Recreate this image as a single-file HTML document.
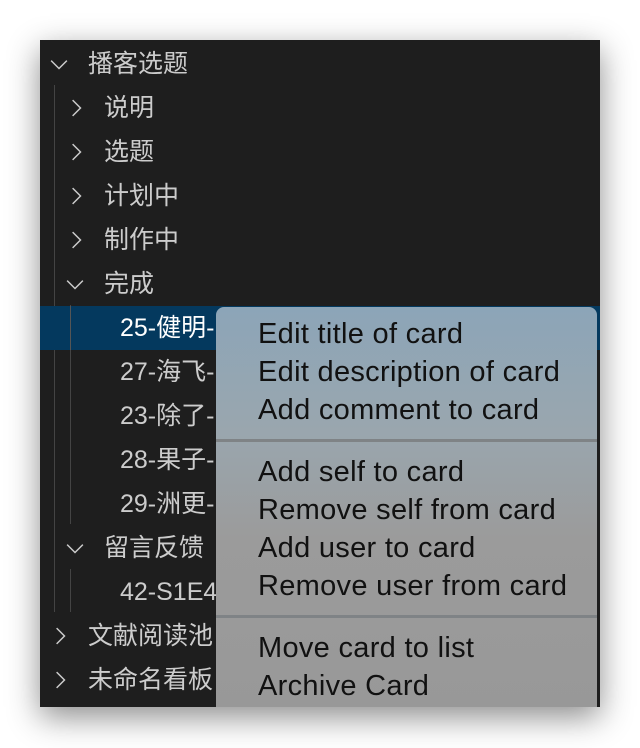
<!DOCTYPE html>
<html><head><meta charset="utf-8"><style>
html,body{margin:0;padding:0;background:#fff;width:640px;height:748px;overflow:hidden}
.panel{position:absolute;left:40px;top:40px;width:560px;height:667px;background:#1e1e1e;box-shadow:0 10px 30px rgba(0,0,0,.45);overflow:hidden}
.row{position:absolute;left:0;width:560px;height:44px;line-height:44px;color:#cccccc;font-family:"Liberation Sans","Noto Sans CJK SC",sans-serif;font-size:25px;white-space:nowrap}
.sel{background:#04395e;color:#fff}
.chev{position:absolute;top:13px;width:18px;height:18px}
.g{position:absolute;width:1px;background:#444}
.menu{position:absolute;left:176px;top:267px;width:381px;height:420px;border-radius:8px 8px 0 0;background:linear-gradient(180deg,#8ca5b8 0%,#9aa6ae 30%,#9b9b9b 55%,#989898 100%);font-family:"Liberation Sans",sans-serif;font-size:29px;letter-spacing:0.3px;color:#111}
.mi{position:absolute;left:42px;height:38px;line-height:38px;white-space:nowrap}
.sep{position:absolute;left:0;width:381px;height:3px;background:#7f8386}
</style></head><body>
<div class="panel">
<div class="g" style="left:14px;top:45px;height:527px"></div>
<div class="g" style="left:30px;top:265px;height:219px"></div>
<div class="g" style="left:30px;top:529px;height:43px"></div>

<div class="row" style="top:2px"><svg class="chev" style="left:10px" viewBox="0 0 16 16"><path d="M1 5l7 7 7-7" fill="none" stroke="#ccc" stroke-width="1.3"/></svg><span style="position:absolute;left:48px">播客选题</span></div>
<div class="row" style="top:46px"><svg class="chev" style="left:27px" viewBox="0 0 16 16"><path d="M5 1l7 7-7 7" fill="none" stroke="#ccc" stroke-width="1.3"/></svg><span style="position:absolute;left:64px">说明</span></div>
<div class="row" style="top:90px"><svg class="chev" style="left:27px" viewBox="0 0 16 16"><path d="M5 1l7 7-7 7" fill="none" stroke="#ccc" stroke-width="1.3"/></svg><span style="position:absolute;left:64px">选题</span></div>
<div class="row" style="top:134px"><svg class="chev" style="left:27px" viewBox="0 0 16 16"><path d="M5 1l7 7-7 7" fill="none" stroke="#ccc" stroke-width="1.3"/></svg><span style="position:absolute;left:64px">计划中</span></div>
<div class="row" style="top:178px"><svg class="chev" style="left:27px" viewBox="0 0 16 16"><path d="M5 1l7 7-7 7" fill="none" stroke="#ccc" stroke-width="1.3"/></svg><span style="position:absolute;left:64px">制作中</span></div>
<div class="row" style="top:222px"><svg class="chev" style="left:26px" viewBox="0 0 16 16"><path d="M1 5l7 7 7-7" fill="none" stroke="#ccc" stroke-width="1.3"/></svg><span style="position:absolute;left:64px">完成</span></div>
<div class="row sel" style="top:266px"><div class="g" style="left:30px;top:0;height:44px;background:#555"></div><span style="position:absolute;left:80px">25-健明-</span></div>
<div class="row" style="top:310px"><span style="position:absolute;left:80px">27-海飞-</span></div>
<div class="row" style="top:354px"><span style="position:absolute;left:80px">23-除了-</span></div>
<div class="row" style="top:398px"><span style="position:absolute;left:80px">28-果子-</span></div>
<div class="row" style="top:442px"><span style="position:absolute;left:80px">29-洲更-</span></div>
<div class="row" style="top:486px"><svg class="chev" style="left:26px" viewBox="0 0 16 16"><path d="M1 5l7 7 7-7" fill="none" stroke="#ccc" stroke-width="1.3"/></svg><span style="position:absolute;left:64px">留言反馈</span></div>
<div class="row" style="top:530px"><span style="position:absolute;left:80px">42-S1E4</span></div>
<div class="row" style="top:574px"><svg class="chev" style="left:11px" viewBox="0 0 16 16"><path d="M5 1l7 7-7 7" fill="none" stroke="#ccc" stroke-width="1.3"/></svg><span style="position:absolute;left:48px">文献阅读池</span></div>
<div class="row" style="top:618px"><svg class="chev" style="left:11px" viewBox="0 0 16 16"><path d="M5 1l7 7-7 7" fill="none" stroke="#ccc" stroke-width="1.3"/></svg><span style="position:absolute;left:48px">未命名看板</span></div>

<div class="menu">
<div class="mi" style="top:8px">Edit title of card</div>
<div class="mi" style="top:46px">Edit description of card</div>
<div class="mi" style="top:84px">Add comment to card</div>
<div class="sep" style="top:132px"></div>
<div class="mi" style="top:146px">Add self to card</div>
<div class="mi" style="top:184px">Remove self from card</div>
<div class="mi" style="top:222px">Add user to card</div>
<div class="mi" style="top:260px">Remove user from card</div>
<div class="sep" style="top:308px"></div>
<div class="mi" style="top:322px">Move card to list</div>
<div class="mi" style="top:360px">Archive Card</div>
</div>
</div>
</body></html>
